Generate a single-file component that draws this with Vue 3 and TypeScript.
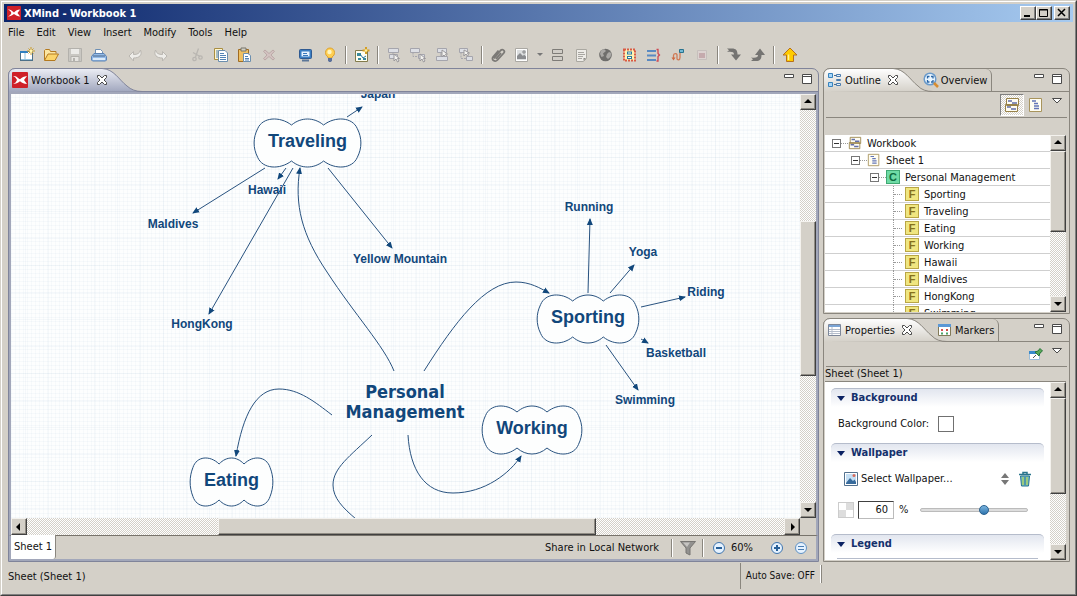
<script setup lang="ts">
import { h, ref } from 'vue'

interface ScrollProps { axis: 'v' | 'h'; before: number; size: number; after: number }

const arrowPath: Record<string, string> = {
  up: 'M0 5L4 1L8 5Z', down: 'M0 2L4 6L8 2Z', left: 'M5 0L1 4L5 8Z', right: 'M3 0L7 4L3 8Z',
}
const scrollButton = (dir: string) =>
  h('button', { class: 'sb-btn', 'aria-label': 'Scroll ' + dir }, [
    h('svg', { viewBox: '0 0 8 8', width: 8, height: 8 }, [h('path', { d: arrowPath[dir] })]),
  ])
const ScrollBar = (p: ScrollProps) =>
  h('div', { class: ['sb', 'sb-' + p.axis] }, [
    scrollButton(p.axis === 'v' ? 'up' : 'left'),
    h('div', { class: 'sb-gap', style: { flexGrow: p.before } }),
    h('div', { class: 'sb-thumb', style: { flexGrow: p.size } }),
    h('div', { class: 'sb-gap', style: { flexGrow: p.after } }),
    scrollButton(p.axis === 'v' ? 'down' : 'right'),
  ])
ScrollBar.props = ['axis', 'before', 'size', 'after']

const icons: Record<string, string> = {
  newBook: '<rect x="1.500" y="4.500" width="12" height="9" fill="#fff" stroke="#4d7088"/><path d="M1 4h8v2H1z" fill="#2e7fc0"/><path d="M6 6v7M2 12.500h11" stroke="#8fc0dc" fill="none"/><path d="M12 0v8M8 4h8M9.500 1.500l5 5M14.500 1.500l-5 5" stroke="#c99c2c"/><circle cx="12" cy="4" r="1.500" fill="#fff6b0"/>',
  open: '<path d="M1.500 13V3.500l1-1h4l1 2h5.500v2" fill="#fbe6a2" stroke="#b47a20"/><path d="M1.500 13.500L5 7h10.500L12 13.500z" fill="#fbd46a" stroke="#b47a20"/>',
  save: '<path d="M1.500 1.500h13v13h-13z" fill="#c9c7c2" stroke="#b3b1ac"/><path d="M4 2h8v5H4z" fill="#ecebe8"/><path d="M4 9.500h8v5H4z" fill="#e6e4e0" stroke="#b3b1ac"/><path d="M6 11h2v3H6z" fill="#b3b1ac"/>',
  print: '<path d="M4.500 7V2.500h5l2 2V7" fill="#fff" stroke="#6d8fb4"/><path d="M3 6.500h10l2.500 3v3.500l-1 1h-13l-1-1V9.500z" fill="#94bbe8" stroke="#5c83b4"/><path d="M2 9h12" stroke="#4b6688"/><path d="M2 12h12" stroke="#dcebfa" stroke-width="2"/>',
  undo: '<path d="M1 9l4.500-4.500V7.500c4 0 6-1 7-4.500 2 5-1 8-7 8v3z" fill="#eeede9" stroke="#bab7b1"/>',
  redo: '<path d="M15 9l-4.500-4.500V7.500c-4 0-6-1-7-4.500-2 5 1 8 7 8v3z" fill="#eeede9" stroke="#bab7b1"/>',
  cut: '<g fill="none" stroke="#b9b6b1" stroke-width="1.300"><path d="M9.500 1.500L6.500 10M4 5.500l7 4"/><circle cx="5.500" cy="12" r="1.700"/><circle cx="11.500" cy="10.500" r="1.700"/></g>',
  copy: '<path d="M1.500 1.500h8v11h-8z" fill="#fff6cf" stroke="#a98e42"/><path d="M5.500 3.500h6.500l2.500 2.500v8.500h-9z" fill="#fff" stroke="#6c8fae"/><path d="M3 4h2M3 6h2M3 8h2M3 10h2M7 6.500h4M7 8.500h6M7 10.500h6M7 12.500h6" stroke="#5484b5"/>',
  paste: '<path d="M1.500 2.500h10v12h-10z" fill="#efc063" stroke="#a06c22"/><path d="M4 1h5v3H4z" fill="#d3d0c5" stroke="#77746a"/><path d="M6.500 6.500H11l2.500 2v6h-7z" fill="#fff" stroke="#6c8fae"/><path d="M8 9.500h3M8 11.500h4M8 13h4" stroke="#5484b5"/>',
  del: '<path d="M4 3l4 3.500L12 3l1.500 1.300L10 8l3.500 3.700L12 13 8 9.500 4 13l-1.500-1.300L6 8 2.500 4.300z" fill="#d3c3c1" stroke="#bba9a7"/>',
  monitor: '<rect x="1.500" y="2.500" width="12" height="9" rx="1" fill="#3a7dc2" stroke="#2f5a91"/><path d="M3.500 4.500h8v5h-8z" fill="#e7f3ff"/><path d="M5 6.500h4M5 8.500h5" stroke="#3978bb"/><path d="M4 13.500h7" stroke="#5c7698" stroke-width="2"/>',
  bulb: '<path d="M6 10C4 8.500 3.500 7.500 3.500 5.500a4.500 4.500 0 019 0c0 2-.5 3-2.500 4.500v1H6z" fill="#ffcf52" stroke="#dda22f"/><circle cx="7.500" cy="5" r="2.200" fill="#fff5c0"/><path d="M6 11h4v2.500l-1 1.500H7l-1-1.500z" fill="#5c719b"/>',
  newSheet: '<path d="M1.500 3.500h12v11h-12z" fill="#fffef0" stroke="#827a4b"/><path d="M3 6h4v3H3zM9 11h3v2H9zM4 11h3v2H4z" fill="#398a9b"/><path d="M6 7l3 4 3-2" stroke="#2b77a6" fill="none"/><path d="M12 0v7M8.500 3.500h7" stroke="#d39e25" stroke-width="2"/><circle cx="12" cy="3.500" r="1.300" fill="#fff3a0"/>',
  topic: '<g fill="#dddfe5" stroke="#a5a5ad"><path d="M2.500 1.500h10v4h-10zM3.500 7.500h8v4h-8z"/><path d="M7 5.500v2" fill="none"/></g><path d="M8 7v7l2-2 1.500 3 1.500-1-1.500-2.500h2z" fill="#f3f2ef" stroke="#9a989b"/>',
  subtopic: '<g fill="#dddfe5" stroke="#a5a5ad"><path d="M.5 1.500h9v4h-9zM8.500 7.500h6v4h-6z"/><path d="M3 5.500v4h5" fill="none" stroke-dasharray="2 1"/></g><path d="M10 7v7l2-2 1.500 3 1.500-1-1.500-2.500h2z" fill="#f3f2ef" stroke="#9a989b"/>',
  before: '<g fill="#dddfe5" stroke="#a5a5ad"><path d="M3.500 1.500h9v4h-9zM2.500 9.500h11v4h-11z"/><path d="M7 5.500v4" fill="none"/></g><path d="M8 3v7l2-2 1.500 2 1-1-1-2h2z" fill="#f3f2ef" stroke="#9a989b"/>',
  parent: '<g fill="#dddfe5" stroke="#a5a5ad"><path d="M1.500 1.500h8v4h-8zM8.500 9.500h6v4h-6z"/><path d="M3 5.500v6h5M6 7v3" fill="none" stroke-dasharray="2 1"/></g><path d="M6 3v6l2-2 1.500 2 1-1-1-2h2z" fill="#f3f2ef" stroke="#9a989b"/>',
  clip: '<path d="M4 11.500L10.500 3.500c2-2 5 .2 3.300 2.500L7.500 13c-2.500 2.600-6.500 0-4.500-3L8.500 3.500M6 12l5-6" fill="none" stroke="#7b7976" stroke-width="1.800"/>',
  image: '<path d="M1.500 1.500h12v13h-12z" fill="#fff" stroke="#aaa8a3"/><path d="M3 3h9v10H3z" fill="#dcdedf"/><path d="M3 12V9l3-3 3 3 1-1.500 2 2V12z" fill="#8b8d90"/><path d="M10 3v4M8 5h4" stroke="#87898b"/>',
  label: '<path d="M2.500 2.500h10v4h-10zM2.500 9.500h10v4h-10z" fill="#d0cdc7" stroke="#7e7c78"/>',
  note: '<path d="M2.500 2.500h10v9l-3 3h-7z" fill="#eeece8" stroke="#aaa8a1"/><path d="M4 5.500h6M4 7.500h7M4 9.500h5M4 11.500h4" stroke="#a8a6a1"/><path d="M12 11H9.500v3z" fill="#8d8b86"/>',
  globe: '<circle cx="7.500" cy="8" r="6.300" fill="#6f6e6c"/><path d="M3 3.500l3-1.500 2 2-3 2.500 1 2.500-2.500 1-1.500-3zM9 7l2-2 2.500 1-1 4-2.500 2-2-2z" fill="#aaa8a5"/>',
  boundary: '<path d="M2 2.500h11v11H2z" fill="#fff2b3" stroke="#d95a44" stroke-width="2" stroke-dasharray="2 1"/><path d="M5 4.500h5v3H5zM5 9h5v3H5z" fill="#287b9c"/><path d="M6 6h3M6 10.500h3" stroke="#fff"/>',
  summary: '<path d="M1 4h9M1 8.500h9M1 13h9" stroke="#5a8ac2" stroke-width="2"/><path d="M10.500 2.500h1.500v4L13.500 8l-1.500 1.500V14h-1.500" fill="none" stroke="#ce4852" stroke-width="1.300"/>',
  relation: '<path d="M3.500 12V8.500C3.500 6 7 6 7 8v3.500c0 2 3 2 3-1V5" fill="none" stroke="#cf7a56" stroke-width="1.300"/><path d="M1.500 10.500h4l-2 3z" fill="#cf6941"/><path d="M9.500 2.500h4v3h-4z" fill="#73b8d4" stroke="#28738f"/>',
  stop: '<path d="M3.500 3.500h9v9h-9z" fill="#dcd2d0" stroke="#c6bfbc"/><path d="M5 6h6v5H5z" fill="#c5aaad"/>',
  drill: '<path d="M1 1.500h5c4 0 5.500 2 5.500 6h3.500l-5 6-5-6h3C8 5 6 4.500 1 5l2-1.700z" fill="#757472"/>',
  drillUp: '<path d="M1 14h5c4 0 5.500-2 5.500-6H15l-5-6.500L5 8h3c0 2.500-2 3-7 2.500l2 1.700z" fill="#757472"/>',
  upload: '<path d="M8 1l7 7h-3.500v6.500h-7V8H1z" fill="#ffcb00" stroke="#b6701d"/><path d="M6.500 7.500V13" stroke="#fff29a" stroke-width="1.500"/>',
  logo: '<rect width="16" height="16" rx="1" fill="#cf2029"/><path d="M1 4c4 0 4 1.500 7 3.300C10 5 12 4.500 15 4l-3 4 3 4c-3 0-4.500-1-7-2.800C5.500 11 4 12 1 12c2.500-1 3-2 4-4-1-2-1.500-3-4-4z" fill="#fff"/>',
  outline: '<path d="M1.500 1.500h4v4h-4zM1.500 10.500h4v4h-4z" fill="#a9d6f8" stroke="#3883bd"/><path d="M7 3.500h2M7 12.500h2" stroke="#4b6b8c"/><path d="M9.500 2.500h4v2h-4zM9.500 7.500h4v1h-4zM9.500 11.500h4v2h-4z" fill="#e3f1fc" stroke="#4b7cae"/>',
  overview: '<circle cx="7" cy="7" r="5.800" fill="#eaf6ff" stroke="#6a9aca" stroke-width="1.500"/><path d="M4.500 6.500v-2h2M8 4.500h2v2M10 8v2H8M6.500 10h-2V8" fill="none" stroke="#2a65a5" stroke-width="1.300"/><path d="M11 11l4 4" stroke="#d88d30" stroke-width="2.500"/>',
  properties: '<path d="M1.500 2.500h12v11h-12z" fill="#fff" stroke="#7d8799"/><path d="M2 3h11v2H2z" fill="#7aa4d5"/><path d="M5 5v8M2 7.500h11M2 9.500h11M2 11.500h11" stroke="#b5bdcb"/>',
  markers: '<path d="M1.500 2.500h12v11h-12z" fill="#fff" stroke="#827a58"/><path d="M1 2h13v3H1z" fill="#5b98d6"/><path d="M4 7h2v2H4z" fill="#d65252"/><path d="M9 7h2v2H9z" fill="#ce4a42"/><path d="M4 10.500h2v2H4z" fill="#4aa668"/><path d="M9 10.500h2v2H9z" fill="#4aa668"/>',
  workbook: '<path d="M2.500 1.500h12v7h-12zM1.500 7.500h12v7h-12z" fill="#fffdf2" stroke="#988248"/><path d="M4 4h4M8 6h5M3 10h4M7 12h5" stroke="#626ea8" stroke-width="1.500"/>',
  sheet: '<path d="M1.500 1.500h12v13h-12z" fill="#fffdf2" stroke="#a8945c"/><path d="M4 4h4M6 6.500h4M6 9h5M6 11.500h5" stroke="#6375b8" stroke-width="1.300"/>',
  pin: '<path d="M1.500 5.500h10v8h-10z" fill="#fff" stroke="#9bbdda"/><path d="M1 5h8v3H1z" fill="#398acb"/><path d="M8 9l-3 3" stroke="#555"/><path d="M7 6l4 4 1-3 2.500-2L12 2.500 10 5z" fill="#58a957" stroke="#28753b"/>',
  picture: '<path d="M1.500 1.500h13v13h-13z" fill="#fff" stroke="#53718e"/><path d="M3 3h10v10H3z" fill="#c5dff4"/><path d="M3 12l4-5 3 3 1.500-1.500L13 11v2H3z" fill="#386b9c"/><circle cx="11" cy="4.500" r="1.500" fill="#d76a5a"/>',
  trash: '<path d="M2 3.500h12M6 3V1.500h4V3" stroke="#28748c" fill="none" stroke-width="1.500"/><path d="M3.500 5h9l-1 10h-7z" fill="#75bccc" stroke="#28748c"/><path d="M6 6v8M10 6v8" stroke="#a8cf65" stroke-width="1.500"/><path d="M8 6v8" stroke="#28748c"/>',
  funnel: '<path d="M.5 1.500h15L10 8v7l-4-2V8z" fill="#92918f" stroke="#777572"/><path d="M3 2.500h7L7 7z" fill="#c6c4c1"/>',
  minus: '<circle cx="8" cy="8" r="5.500" fill="#e5f2ff" stroke="#3f74ad"/><path d="M5 8h6" stroke="#286098" stroke-width="2"/>',
  plus: '<circle cx="8" cy="8" r="5.500" fill="#e5f2ff" stroke="#3f74ad"/><path d="M5 8h6M8 5v6" stroke="#286098" stroke-width="2"/>',
  equal: '<circle cx="8" cy="8" r="5.500" fill="#e5f2ff" stroke="#5f91c4"/><path d="M5 6.500h6M5 9.500h6" stroke="#4b7eb2"/>',
  close: '<path d="M3.500 3.500h2L8 6l2.500-2.500h2v2L10 8l2.500 2.500v2h-2L8 10l-2.500 2.500h-2v-2L6 8 3.500 5.500z" fill="#fff" stroke="#4a4a4a"/>',
  minView: '<path d="M3.500 3.500h9v3h-9z" fill="#fff" stroke="#4a4a4a"/>',
  maxView: '<path d="M3.500 3.500h9v9h-9zM3.500 5.500h9" fill="#fff" stroke="#4a4a4a"/>',
  menu: '<path d="M3.500 5.500h9L8 10z" fill="#fff" stroke="#4a4a4a"/>',
}
const Icon = (p: { name: string }) =>
  h('svg', { class: 'ico', viewBox: '0 0 16 16', width: 16, height: 16, 'aria-hidden': 'true', innerHTML: icons[p.name] })
Icon.props = ['name']

const menus = ['File', 'Edit', 'View', 'Insert', 'Modify', 'Tools', 'Help']
const tools = [
  'newBook', 'open', 'save', 'print', 'gap', 'undo', 'redo', 'gap', 'cut', 'copy', 'paste', 'del', 'gap',
  'monitor', 'bulb', 'sep', 'newSheet', 'sep', 'topic', 'subtopic', 'before', 'parent', 'sep', 'clip', 'image',
  'caret', 'label', 'note', 'globe', 'boundary', 'summary', 'relation', 'stop', 'sep', 'drill', 'drillUp', 'sep', 'upload',
]

const clouds = [
  { text: 'Traveling', x: 243, y: 25, w: 107, h: 48 },
  { text: 'Sporting', x: 526, y: 201, w: 102, h: 48 },
  { text: 'Working', x: 471, y: 312, w: 100, h: 48 },
  { text: 'Eating', x: 179, y: 364, w: 83, h: 48 },
]
const leaves = [
  { text: 'Japan', x: 367, y: 4 }, { text: 'Hawaii', x: 256, y: 100 }, { text: 'Maldives', x: 162, y: 134 },
  { text: 'Yellow Mountain', x: 389, y: 169 }, { text: 'HongKong', x: 191, y: 234 }, { text: 'Running', x: 578, y: 117 },
  { text: 'Yoga', x: 632, y: 162 }, { text: 'Riding', x: 695, y: 202 }, { text: 'Basketball', x: 665, y: 263 },
  { text: 'Swimming', x: 634, y: 310 },
]
const links = [
  'M336 23L351 13', 'M254 74L182 119', 'M275 74L267 85', 'M282 74L198 220', 'M317 74L381 154',
  'M577 199L579 125', 'M599 199L623 171', 'M630 213L674 203', 'M630 245L637 249', 'M595 251L627 296',
  'M383 277C373 252 344 221 316 178C291 141 283 111 289 74',
  'M413 277C444 228 474 188 505 188C519 188 529 194 538 199',
  'M321 321C304 308 288 295 268 295C245 295 232 321 225 362',
  'M397 341C399 376 414 399 442 399C474 399 499 379 510 362',
]
function cloudPath(c: { x: number; y: number; w: number; h: number }): string {
  const X = (f: number) => Math.round((c.x + f * c.w) * 10) / 10
  const t = c.y
  const b = c.y + c.h
  const u = t + c.h * 0.2
  const l = b - c.h * 0.2
  return `M${X(0.35)} ${t + 6}C${X(0.44)} ${t - 2} ${X(0.56)} ${t - 2} ${X(0.65)} ${t + 6}` +
    `C${X(0.76)} ${t - 3} ${X(0.92)} ${t - 2} ${X(0.965)} ${u}C${X(1.01)} ${t + 19} ${X(1.01)} ${b - 19} ${X(0.965)} ${l}` +
    `C${X(0.92)} ${b + 2} ${X(0.76)} ${b + 3} ${X(0.65)} ${b - 6}C${X(0.56)} ${b + 2} ${X(0.44)} ${b + 2} ${X(0.35)} ${b - 6}` +
    `C${X(0.24)} ${b + 3} ${X(0.08)} ${b + 2} ${X(0.035)} ${l}C${X(-0.01)} ${b - 19} ${X(-0.01)} ${t + 19} ${X(0.035)} ${u}` +
    `C${X(0.08)} ${t - 2} ${X(0.24)} ${t - 3} ${X(0.35)} ${t + 6}Z`
}

const tree = [
  { text: 'Workbook', depth: 0, icon: 'workbook' },
  { text: 'Sheet 1', depth: 1, icon: 'sheet' },
  { text: 'Personal Management', depth: 2, icon: 'C' },
  ...['Sporting', 'Traveling', 'Eating', 'Working', 'Hawaii', 'Maldives', 'HongKong', 'Swimming']
    .map((text) => ({ text, depth: 3, icon: 'F' })),
]
const opacity = ref(60)
</script>

<template>
  <div class="window">
    <div class="window-in">
      <header class="title">
        <Icon name="logo" />
        <h1>XMind - Workbook 1</h1>
        <div class="win-btns">
          <button aria-label="Minimize window"><svg width="12" height="10"><path d="M2 8h6" stroke="#000" stroke-width="2" /></svg></button>
          <button aria-label="Maximize window"><svg width="12" height="10"><path d="M1.500 1.500h8v7h-8zM1 2h9" fill="none" stroke="#000" /></svg></button>
          <button class="apart" aria-label="Close window"><svg width="12" height="10"><path d="M2 1l7 7M9 1L2 8" stroke="#000" stroke-width="1.500" /></svg></button>
        </div>
      </header>
      <nav class="menubar"><button v-for="m in menus" :key="m">{{ m }}</button></nav>
      <div class="toolbar">
        <template v-for="(t, i) in tools" :key="i">
          <span v-if="t === 'gap'" class="gap"></span>
          <span v-else-if="t === 'sep'" class="sep"></span>
          <button v-else-if="t === 'caret'" class="caret" aria-label="Image options"><svg width="6" height="4"><path d="M0 0h6L3 3z" fill="#777" /></svg></button>
          <button v-else class="tool" :aria-label="t"><Icon :name="t" /></button>
        </template>
      </div>

      <main class="main">
        <section class="view editor">
          <div class="tabs">
            <div class="tab active">
              <svg class="tab-shape" width="134" height="24" aria-hidden="true">
                <defs><linearGradient id="blueTab" x2="0" y2="1"><stop stop-color="#eceef5" /><stop offset="1" stop-color="#a0a6bd" /></linearGradient></defs>
                <path d="M.5 24V7Q1 1 7 .5H94C106 1 111 12 119 18Q125 23.500 134 23.500" fill="url(#blueTab)" stroke="#80849a" />
              </svg>
              <button class="tab-label"><Icon name="logo" /><span>Workbook 1</span></button>
              <button class="x" aria-label="Close Workbook 1"><Icon name="close" /></button>
            </div>
            <div class="view-btns">
              <button aria-label="Minimize editor"><Icon name="minView" /></button>
              <button aria-label="Maximize editor"><Icon name="maxView" /></button>
            </div>
          </div>
          <div class="editor-body">
            <div class="canvas">
              <svg class="map" width="100%" height="100%">
                <defs>
                  <marker id="head" markerWidth="8" markerHeight="8" refX="6" refY="4" orient="auto" markerUnits="userSpaceOnUse">
                    <path d="M0 1L7 4L0 7Z" fill="#11477b" />
                  </marker>
                </defs>
                <path v-for="l in links" :key="l" :d="l" class="link" marker-end="url(#head)" />
                <path class="link" d="M361 341C339 362 322 374 322 391C322 404 332 414 345 425" />
                <g v-for="c in clouds" :key="c.text">
                  <path :d="cloudPath(c)" class="cloud" />
                  <text :x="c.x + c.w / 2" :y="c.y + 28" class="main-topic">{{ c.text }}</text>
                </g>
                <text v-for="l in leaves" :key="l.text" :x="l.x" :y="l.y" class="leaf">{{ l.text }}</text>
                <text x="394" y="304" class="central">Personal</text>
                <text x="394" y="324" class="central">Management</text>
              </svg>
            </div>
            <ScrollBar axis="v" :before="112" :size="153" :after="127" />
            <ScrollBar axis="h" :before="191" :size="377" :after="189" />
            <div class="corner"></div>
          </div>
          <div class="sheetbar">
            <button class="sheet-tab">Sheet 1</button>
            <button class="share">Share in Local Network</button>
            <span class="sep"></span>
            <button class="tool wide" aria-label="Filter"><Icon name="funnel" /></button>
            <span class="sep"></span>
            <button class="tool" aria-label="Zoom out"><Icon name="minus" /></button>
            <span class="zoom-val">60%</span>
            <button class="tool" aria-label="Zoom in"><Icon name="plus" /></button>
            <button class="tool" aria-label="Actual size"><Icon name="equal" /></button>
          </div>
        </section>

        <aside class="side">
          <section class="view outline">
            <div class="tabs">
              <div class="tab active">
                <svg class="tab-shape" width="110" height="24" aria-hidden="true">
                  <defs><linearGradient id="whiteTab" x2="0" y2="1"><stop stop-color="#fff" /><stop offset="1" stop-color="#d4d0c8" /></linearGradient></defs>
                  <path d="M.5 24V7Q1 1 7 .5H70C82 1 87 12 95 18Q100 23.500 110 23.500" fill="url(#whiteTab)" stroke="#8a867e" />
                </svg>
                <button class="tab-label"><Icon name="outline" /><span>Outline</span></button>
                <button class="x" aria-label="Close Outline"><Icon name="close" /></button>
              </div>
              <button class="tab-label other"><Icon name="overview" /><span>Overview</span></button>
              <div class="view-btns">
                <button aria-label="Minimize outline"><Icon name="minView" /></button>
                <button aria-label="Maximize outline"><Icon name="maxView" /></button>
              </div>
            </div>
            <div class="viewbar">
              <button class="toggle pressed" aria-label="Show workbook"><Icon name="workbook" /></button>
              <button class="toggle" aria-label="Show sheet"><Icon name="sheet" /></button>
              <button class="drop" aria-label="Outline menu"><Icon name="menu" /></button>
            </div>
            <div class="spacer"></div>
            <div class="scroll-area tree-area">
              <ul class="tree">
                <li v-for="n in tree" :key="n.text" :class="'d' + n.depth">
                  <button v-if="n.depth < 3" class="expander" :aria-label="'Collapse ' + n.text"></button>
                  <span v-else class="stem"></span>
                  <span class="dots"></span>
                  <span v-if="n.icon.length === 1" class="badge" :class="n.icon">{{ n.icon }}</span>
                  <Icon v-else :name="n.icon" />
                  <span class="node">{{ n.text }}</span>
                </li>
              </ul>
              <ScrollBar axis="v" :before="0" :size="80" :after="64" />
            </div>
          </section>

          <section class="view props">
            <div class="tabs">
              <div class="tab active">
                <svg class="tab-shape" width="124" height="24" aria-hidden="true">
                  <path d="M.5 24V7Q1 1 7 .5H84C96 1 101 12 109 18Q114 23.500 124 23.500" fill="url(#whiteTab)" stroke="#8a867e" />
                </svg>
                <button class="tab-label"><Icon name="properties" /><span>Properties</span></button>
                <button class="x" aria-label="Close Properties"><Icon name="close" /></button>
              </div>
              <button class="tab-label other"><Icon name="markers" /><span>Markers</span></button>
              <div class="view-btns">
                <button aria-label="Minimize properties"><Icon name="minView" /></button>
                <button aria-label="Maximize properties"><Icon name="maxView" /></button>
              </div>
            </div>
            <div class="viewbar">
              <button class="toggle" aria-label="Pin view"><Icon name="pin" /></button>
              <button class="drop" aria-label="Properties menu"><Icon name="menu" /></button>
            </div>
            <div class="caption">Sheet (Sheet 1)</div>
            <div class="scroll-area">
              <form class="form" @submit.prevent>
                <h2><svg width="8" height="5"><path d="M0 0h8L4 5z" fill="#0b2263" /></svg>Background</h2>
                <div class="row first">
                  <label for="bgcolor">Background Color:</label>
                  <button id="bgcolor" class="swatch" type="button"></button>
                </div>
                <h2><svg width="8" height="5"><path d="M0 0h8L4 5z" fill="#0b2263" /></svg>Wallpaper</h2>
                <div class="row pick">
                  <button type="button" class="select"><Icon name="picture" />Select Wallpaper...<svg class="updown" width="8" height="12"><path d="M0 5L4 0L8 5ZM0 7L4 12L8 7Z" fill="#777" /></svg></button>
                  <button type="button" class="bin" aria-label="Remove wallpaper"><Icon name="trash" /></button>
                </div>
                <div class="row slide">
                  <span class="checker"></span>
                  <input id="opacity" v-model="opacity" type="text" aria-label="Opacity" />
                  <label for="opacity">%</label>
                  <input v-model="opacity" type="range" min="0" max="100" aria-label="Opacity slider" />
                </div>
                <h2><svg width="8" height="5"><path d="M0 0h8L4 5z" fill="#0b2263" /></svg>Legend</h2>
                <div class="next"></div>
              </form>
              <ScrollBar axis="v" :before="0" :size="95" :after="50" />
            </div>
          </section>
        </aside>
      </main>

      <footer class="status">
        <span class="msg">Sheet (Sheet 1)</span>
        <span class="save">Auto Save: OFF</span>
        <span class="grip"></span>
      </footer>
    </div>
  </div>
</template>

<style>
body { margin: 0; background: #d4d0c8; }
.ico { display: block; flex: none; }
.sb {
  display: flex; min-width: 0; min-height: 0;
  background: repeating-conic-gradient(#fff 0 25%, #d4d0c8 0 50%) 0 0 / 2px 2px;
}
.sb-v { flex-direction: column; width: 16px; }
.sb-h { height: 17px; }
.sb-btn, .sb-thumb {
  box-sizing: border-box; background: #d4d0c8; border: 1px solid; border-color: #f4f2ee #404040 #404040 #f4f2ee;
  box-shadow: inset -1px -1px #908c84;
}
.sb-btn { flex: none; width: 16px; height: 16px; padding: 0; display: flex; align-items: center; justify-content: center; }
.sb-h .sb-btn { height: 17px; }
.sb-gap, .sb-thumb { flex-basis: 0; }
</style>

<style scoped>
.window {
  box-sizing: border-box; height: 100vh; min-height: 560px; min-width: 900px; background: #d4d0c8;
  border: 1px solid; border-color: #d4d0c8 #404040 #404040 #d4d0c8;
  font: 11px/14px "DejaVu Sans Condensed", "DejaVu Sans", sans-serif; color: #111;
}
.window-in {
  box-sizing: border-box; height: 100%; padding: 2px; display: flex; flex-direction: column;
  border: 1px solid; border-color: #fff #808080 #808080 #fff;
}
button { font: inherit; color: inherit; background: none; border: 0; padding: 0; display: flex; align-items: center; }
.title { display: flex; align-items: center; height: 18px; padding: 0 3px; background: linear-gradient(90deg, #0a246a, #a6caf0); flex: none; }
.title .ico { width: 14px; height: 14px; }
.title h1 { margin: 0; padding: 1px 0 0 3px; font-size: 11px; font-weight: bold; color: #fff; flex: 1; }
.win-btns { display: flex; }
.win-btns button {
  box-sizing: border-box; width: 16px; height: 14px; justify-content: center; background: #d4d0c8;
  border: 1px solid; border-color: #fff #404040 #404040 #fff; box-shadow: inset -1px -1px #808080;
}
.win-btns .apart { margin-left: 2px; }
.menubar { display: flex; flex: none; height: 20px; box-sizing: border-box; padding: 1px 0 0 4px; gap: 12px; }
.toolbar { display: flex; flex: none; height: 26px; align-items: center; padding-left: 11px; }
.tool { width: 24px; height: 24px; justify-content: center; flex: none; }
.gap { width: 13px; flex: none; }
.sep { width: 2px; height: 18px; margin: 0 3px; flex: none; box-sizing: border-box; border-left: 1px solid #8a867e; border-right: 1px solid #fff; }
.caret { width: 12px; height: 24px; justify-content: center; }

.main { flex: 1; min-height: 0; display: grid; grid-template-columns: minmax(0, 1fr) 247px; gap: 4px; padding: 0 3px 0 4px; }
.side { display: grid; grid-template-rows: 246px minmax(0, 1fr); gap: 4px; min-height: 0; }
.view { box-sizing: border-box; min-height: 0; min-width: 0; display: flex; flex-direction: column; border: 1px solid #8a867e; border-radius: 7px 7px 0 0; }
.tabs { position: relative; flex: none; height: 22px; display: flex; align-items: center; border-bottom: 1px solid #8a867e; }
.tab { position: relative; display: flex; align-items: center; height: 24px; flex: none; }
.tab-shape { position: absolute; left: -1px; top: 0; }
.tab-label { position: relative; gap: 3px; padding-left: 3px; white-space: nowrap; }
.tab-label span { padding-top: 2px; }
.side .tab-label { gap: 2px; }
.x { position: relative; margin-left: 4px; }
.view-btns { display: flex; gap: 2px; margin-left: auto; padding: 0 4px 2px 0; }
.editor .view-btns { padding-right: 3px; }
.other { height: 22px; border-right: 1px solid #8a867e; border-radius: 0 6px 0 0; padding-right: 4px; }
.outline .other, .props .other { margin-left: 19px; }

.editor { border-color: #80849a; }
.editor .tabs { border-bottom-color: #80849a; }
.editor-body {
  flex: 1; min-height: 0; display: grid; grid-template: minmax(0, 1fr) 17px / minmax(0, 1fr) 16px;
  border: 2px solid #a2a7ba; border-bottom: 0;
}
.canvas {
  min-width: 0; min-height: 0; overflow: hidden; background-color: #fdfefe;
  background-image:
    repeating-linear-gradient(90deg, rgba(120, 160, 190, .05) 0 1px, transparent 1px 4px),
    repeating-linear-gradient(0deg, rgba(120, 160, 190, .05) 0 1px, transparent 1px 4px),
    repeating-linear-gradient(90deg, transparent 0 14px, rgba(110, 150, 190, .06) 14px 15px, transparent 15px 23px),
    repeating-linear-gradient(0deg, transparent 0 9px, rgba(110, 150, 190, .06) 9px 10px, transparent 10px 27px);
}
.map { display: block; }
.link { fill: none; stroke: #28527f; stroke-width: 1; }
.cloud { fill: #fdfefe; stroke: #28527f; stroke-width: 1; }
text { fill: #11477b; font-family: "Liberation Sans", Arial, sans-serif; font-weight: bold; text-anchor: middle; }
.main-topic { font-size: 18px; }
.leaf { font-size: 12px; }
.central { font-family: "DejaVu Sans Condensed", "DejaVu Sans", sans-serif; font-size: 18px; }
.corner { background: #d4d0c8; }
.sheetbar {
  flex: none; height: 23px; display: flex; align-items: center; border: 2px solid #a2a7ba; border-top: 1px solid #77736b; padding-right: 3px;
}
.sheet-tab { align-self: stretch; background: #fff; padding: 0 3px; border-right: 1px solid #8a867e; border-radius: 0 0 3px 0; margin-top: -1px; }
.share { margin-left: auto; margin-right: 9px; }
.wide { width: 23px; }
.zoom-val { width: 34px; }

.viewbar { flex: none; height: 25px; margin: 0 2px; display: flex; align-items: center; justify-content: flex-end; border-bottom: 1px solid #8a867e; }
.props .viewbar { height: 24px; }
.toggle { box-sizing: border-box; width: 24px; height: 22px; justify-content: center; }
.pressed { border: 1px solid; border-color: #808080 #fff #fff #808080; background: repeating-conic-gradient(#fff 0 25%, #d4d0c8 0 50%) 0 0 / 2px 2px; }
.drop { align-self: flex-start; margin: 1px 2px 0 1px; }
.spacer { flex: none; height: 17px; }
.scroll-area { flex: 1; min-height: 0; display: flex; margin: 0 3px 1px 1px; background: #fff; }
.tree { flex: 1; margin: 0; padding: 0; list-style: none; overflow: hidden; min-width: 0; }
.tree li { box-sizing: border-box; height: 17px; display: flex; align-items: center; border-bottom: 1px solid #cfcfcf; padding-left: 7px; white-space: nowrap; }
.tree .d1 { padding-left: 26px; }
.tree .d2 { padding-left: 45px; }
.tree .d3 { padding-left: 64px; }
.expander { width: 9px; height: 9px; flex: none; box-sizing: border-box; border: 1px solid #777; background: linear-gradient(#333, #333) center / 5px 1px no-repeat #fff; }
.stem { width: 5px; height: 17px; margin-left: 4px; flex: none; border-left: 1px dotted #999; box-sizing: border-box; }
.dots { width: 7px; height: 0; border-top: 1px dotted #999; flex: none; }
.d3 .dots { width: 8px; margin-right: 3px; margin-left: -4px; }
.tree .ico { width: 14px; height: 14px; }
.badge { width: 14px; height: 14px; box-sizing: border-box; flex: none; text-align: center; font: bold 11px/12px "Liberation Sans", sans-serif; border: 1px solid; }
.badge.C { background: #6fdba5; border-color: #3fa872; color: #0d6b3f; }
.badge.F { background: #f0e680; border-color: #b9a645; color: #86701c; }
.node { padding: 2px 0 0 5px; }

.caption { flex: none; height: 15px; margin: 0 3px 0 1px; border-bottom: 1px solid #8a867e; box-sizing: border-box; }
.form { flex: 1; min-width: 0; overflow: hidden; padding: 6px 6px 0; }
.form h2 {
  margin: 0; height: 19px; box-sizing: border-box; display: flex; align-items: center; gap: 6px; padding-left: 6px;
  font-size: 11px; font-weight: bold; color: #14306c; border-top: 1px solid #b5bccb; border-radius: 5px 5px 0 0;
  background: linear-gradient(#e2e6ef, #fff);
}
.row { display: flex; align-items: center; padding-left: 7px; }
.first { height: 36px; box-sizing: border-box; padding-bottom: 3px; gap: 9px; }
.swatch { width: 16px; height: 16px; box-sizing: border-box; border: 1px solid #707070; background: #fff; }
.pick { height: 34px; padding-left: 12px; }
.select { flex: 1; gap: 2px; }
.updown { margin-left: auto; }
.bin { margin: 0 11px 0 8px; }
.slide { height: 27px; margin-bottom: 11px; }
.checker { width: 16px; height: 16px; box-sizing: border-box; border: 1px solid #ccc; background: conic-gradient(#ddd 25%, #fff 0 50%, #ddd 0 75%, #fff 0); flex: none; }
.slide input[type="text"] {
  box-sizing: border-box; width: 36px; height: 18px; margin: 0 5px 0 4px; padding: 0 5px; text-align: right; font: inherit; color: inherit;
  border: 1px solid; border-color: #404040 #bbb #bbb #404040; background: #fff;
}
.slide input[type="range"] { appearance: none; flex: 1; min-width: 0; margin: 0 16px 0 12px; height: 12px; background: none; }
.slide input[type="range"]::-webkit-slider-runnable-track { height: 4px; box-sizing: border-box; border: 1px solid #bbb; border-radius: 2px; background: #ddd; }
.slide input[type="range"]::-webkit-slider-thumb { appearance: none; width: 10px; height: 10px; margin-top: -4px; border: 1px solid #28608f; box-sizing: border-box; border-radius: 50%; background: linear-gradient(#7ab4df, #2f75ae); }
.next { height: 10px; margin: 5px 6px 0; border-top: 1px solid #b5bccb; }

.status { flex: none; height: 30px; display: flex; padding: 0 4px; }
.msg { flex: 1; align-self: center; }
.save { align-self: stretch; margin: 1px 0 3px; padding: 0 5px; border-left: 1px solid #8a867e; font-size: 10px; display: flex; align-items: center; }
.grip { width: 2px; height: 18px; margin: 3px 247px 0 0; box-sizing: border-box; border-left: 1px solid #fff; border-right: 1px solid #8a867e; }
</style>
